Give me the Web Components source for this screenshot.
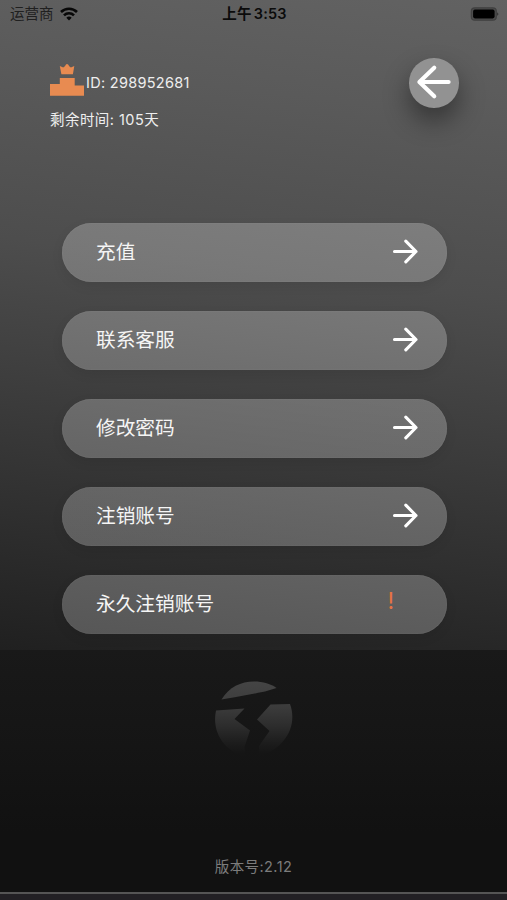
<!DOCTYPE html>
<html lang="zh-CN">
<head>
<meta charset="utf-8">
<title>账号</title>
<style>
html,body{margin:0;height:900px;background:#111;overflow:hidden}
body{font-family:Inter,"Noto Sans CJK SC",sans-serif}
</style>
</head>
<body>
<account-screen></account-screen>
<script>
function define(name, html) {
  const t = document.createElement('template');
  t.innerHTML = html;
  customElements.define(name, class extends HTMLElement {
    constructor() {
      super();
      this.attachShadow({mode: 'open'}).append(t.content.cloneNode(true));
    }
  });
}

define('status-bar', `
<style>
:host{display:grid;grid-template-columns:1fr auto 1fr;align-items:center;height:28px;padding:0 8px 0 10px;box-sizing:border-box;color:#0b0b0b}
.l{display:flex;align-items:center;gap:6px;font-size:14.5px;line-height:20px;color:#202020}
.t{font-size:14.5px;line-height:20px;font-weight:600;display:flex;gap:2px;letter-spacing:.2px}
.b{justify-self:end;display:block}
svg{display:block}
</style>
<div class="l"><span>运营商</span><svg width="18" height="14" viewBox="0 0 18 14" fill="none" stroke="#080808" stroke-width="2.6"><path d="M1 5C5.5.6 12.500.6 17 5"/><path d="M4 8.300C6.800 5.500 11.200 5.500 14 8.300"/><path d="M9 13.500L6.300 10.700Q9 8.500 11.700 10.700Z" fill="#080808" stroke="none"/></svg></div>
<div class="t"><span>上午</span><span>3:53</span></div>
<svg class="b" width="30" height="14" viewBox="0 0 30 14"><rect x="2.300" y=".8" width="25" height="12.400" rx="3.500" fill="#4c4c4c" stroke="#404040" stroke-width="1.200"/><rect x="4.100" y="2.600" width="21.500" height="8.800" rx="1.800" fill="#000"/><path d="M28.200 5.200Q30.500 7 28.200 8.800Z" fill="#303030"/></svg>`);

define('podium-icon', `
<style>:host{display:block;width:34px;height:32px}svg{display:block}</style>
<svg width="34" height="32" viewBox="0 0 34 32" fill="#e88b51"><path d="M9.800 2L13.200 3.600L14.900 2.300Q16 0 17 0Q18.200 0 19.200 2.300L20.900 3.600L24.300 2L22.900 10.300H11.400Z"/><path d="M9.800 14H24.700V21.500H34V31.800H0V20H9.800Z"/></svg>`);

define('back-button', `
<style>
:host{display:flex;align-items:center;justify-content:center;width:49.500px;height:49.500px;border-radius:50%;background:#929292;box-shadow:0 13px 26px rgba(0,0,0,.42)}
svg{display:block}
</style>
<svg width="50" height="50" viewBox="0 0 50 50" fill="none" stroke="#fff" stroke-width="4.200" stroke-linecap="round" stroke-linejoin="round"><path d="M40 24H11M25.500 9.500L10.500 24L25.500 38.500"/></svg>`);

define('arrow-icon', `
<style>:host{display:block;width:26px;height:26px}svg{display:block}</style>
<svg width="26" height="26" viewBox="0 0 26 26" fill="none" stroke="#fff" stroke-width="3.100" stroke-linecap="round" stroke-linejoin="round"><path d="M2.500 13.500H24M13.800 3.200L24 13.500L13.800 23.800"/></svg>`);

define('menu-item', `
<style>
:host{display:flex;align-items:center;justify-content:space-between;width:385px;height:59px;box-sizing:border-box;padding:0 29px 3px 34px;border-radius:30px;color:#f5f5f5;font-size:19.700px;line-height:30px;background:linear-gradient(8deg,rgba(255,255,255,.235),rgba(255,255,255,.25));box-shadow:inset 0 0 1px rgba(255,255,255,.25),0 4px 12px rgba(0,0,0,.08)}
span{padding-top:2px}
</style>
<span><slot></slot></span><slot name="end"></slot>`);

define('brand-mark', `
<style>:host{display:block;width:78px;height:76px}svg{display:block}</style>
<svg width="78" height="76" viewBox="0 0 78 76"><defs><linearGradient id="g" x1="0" y1="0" x2="0" y2="76" gradientUnits="userSpaceOnUse"><stop offset="0" stop-color="#454545"/><stop offset=".35" stop-color="#3b3b3b"/><stop offset=".6" stop-color="#2c2c2c"/><stop offset=".82" stop-color="#1c1c1c"/><stop offset=".95" stop-color="#151515"/></linearGradient></defs>
<g fill="url(#g)"><path d="M6.500 18.500C14 6 26 .5 39 .5C48 .5 56 3 61.500 7L50 10.500Q28 15 6.500 18.500Z"/><path d="M1 29.500L29.500 27.500L19.500 38L35 49.500L29.500 66L31 75.500C12 72-4 53 1 29.500Z"/><path d="M55.500 23.500L75 23C83 45 70 68 43.500 75.500L44 65L54.500 50L42 38.500Z"/></g></svg>`);

define('account-screen', `
<style>
:host{display:flex;flex-direction:column;width:507px;height:900px;background:#111;box-sizing:border-box}
.top{height:650px;box-sizing:border-box;background:linear-gradient(187deg,#626262 0,#5a5a5a 17%,#4d4d4d 42%,#353535 73%,#202020 100%)}
.head{display:flex;justify-content:space-between;padding:30px 48.500px 0 50px;height:195px;box-sizing:border-box}
.who{display:flex;flex-direction:column;padding-top:5px;color:#eee;font-size:14.500px;line-height:20px;white-space:nowrap}
.id{display:flex;align-items:center;gap:2px;height:33px;margin-bottom:14px;letter-spacing:.29px}
.id span{padding-top:7px}
.left{letter-spacing:.45px}
.menu{display:flex;flex-direction:column;gap:29px;padding-left:62px}
.warn{color:#e57343;font-size:23px;line-height:30px;width:6px;margin-right:24.500px;margin-top:-4px;text-align:center}
.foot{flex:1;display:flex;flex-direction:column;align-items:center;background:linear-gradient(#191919,#151515 40%,#111 75%);padding-top:31px;box-sizing:border-box}
.ver{margin-top:100px;font-size:14.500px;line-height:20px;color:#7c7c7c;letter-spacing:.4px}
.edge{height:8px;background:#222024;border-top:2px solid #555;box-sizing:border-box}
</style>
<div class="top">
<status-bar></status-bar>
<div class="head"><div class="who"><div class="id"><podium-icon></podium-icon><span>ID: 298952681</span></div><div class="left">剩余时间: 105天</div></div><back-button></back-button></div>
<div class="menu">
<menu-item>充值<arrow-icon slot="end"></arrow-icon></menu-item>
<menu-item>联系客服<arrow-icon slot="end"></arrow-icon></menu-item>
<menu-item>修改密码<arrow-icon slot="end"></arrow-icon></menu-item>
<menu-item>注销账号<arrow-icon slot="end"></arrow-icon></menu-item>
<menu-item>永久注销账号<span class="warn" slot="end">!</span></menu-item>
</div>
</div>
<div class="foot"><brand-mark></brand-mark><div class="ver">版本号:2.12</div></div>
<div class="edge"></div>`);
</script>
</body>
</html>
